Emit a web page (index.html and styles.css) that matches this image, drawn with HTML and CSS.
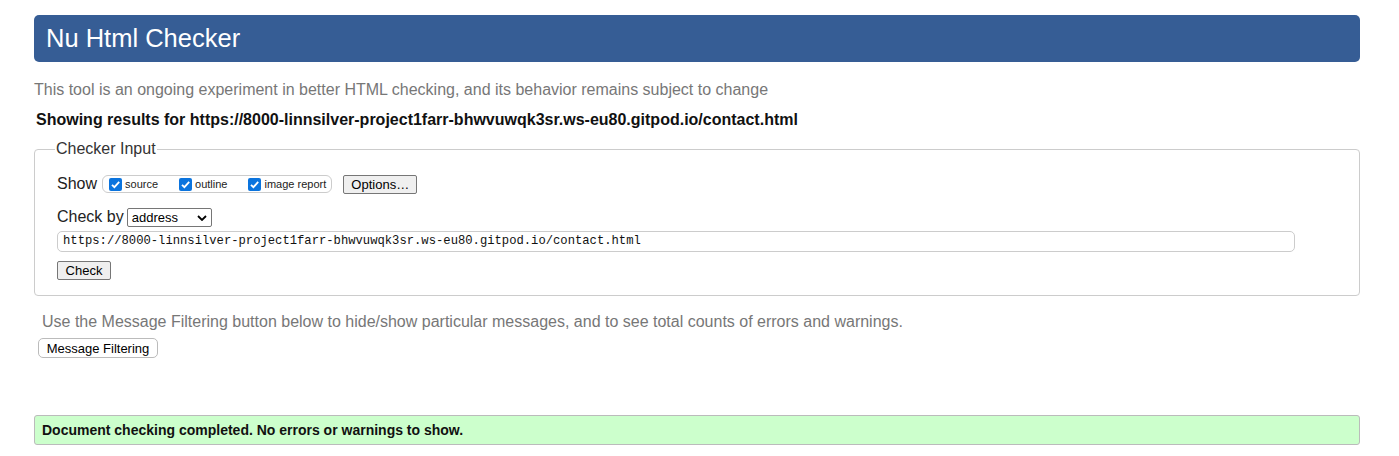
FILE: index.html
```html
<!DOCTYPE html>
<html>
<head>
<meta charset="utf-8">
<title>Nu Html Checker</title>
<link rel="stylesheet" href="styles.css">
</head>
<body>
<div class="page">
  <h1 class="header">Nu Html Checker</h1>
  <p class="intro">This tool is an ongoing experiment in better HTML checking, and its behavior remains subject to change</p>
  <p class="showing">Showing results for https://8000-linnsilver-project1farr-bhwvuwqk3sr.ws-eu80.gitpod.io/contact.html</p>
  <fieldset class="input">
    <legend>Checker Input</legend>
    <div class="row show-row">
      <span class="lbl">Show</span>
      <span class="group">
        <label class="opt"><span class="cb"><svg viewBox="0 0 13 13" width="13" height="13"><path d="M3 6.8 L5.4 9.2 L10.2 3.8" fill="none" stroke="#fff" stroke-width="1.8"/></svg></span>source</label>
        <label class="opt"><span class="cb"><svg viewBox="0 0 13 13" width="13" height="13"><path d="M3 6.8 L5.4 9.2 L10.2 3.8" fill="none" stroke="#fff" stroke-width="1.8"/></svg></span>outline</label>
        <label class="opt"><span class="cb"><svg viewBox="0 0 13 13" width="13" height="13"><path d="M3 6.8 L5.4 9.2 L10.2 3.8" fill="none" stroke="#fff" stroke-width="1.8"/></svg></span>image report</label>
      </span>
      <span class="btn options">Options…</span>
    </div>
    <div class="row by-row">
      <span class="lbl">Check by</span>
      <span class="select">address<svg class="chev" viewBox="0 0 10 6" width="10" height="6"><path d="M1 1 L5 5 L9 1" fill="none" stroke="#000" stroke-width="1.8"/></svg></span>
    </div>
    <div class="url">https://8000-linnsilver-project1farr-bhwvuwqk3sr.ws-eu80.gitpod.io/contact.html</div>
    <div class="row"><span class="btn check">Check</span></div>
  </fieldset>
  <p class="filter-note">Use the Message Filtering button below to hide/show particular messages, and to see total counts of errors and warnings.</p>
  <span class="btn filter">Message Filtering</span>
  <div class="success">Document checking completed. No errors or warnings to show.</div>
</div>
</body>
</html>
```
FILE: styles.css
```css
html, body { margin: 0; padding: 0; background: #fff; }
body { font-family: "Liberation Sans", Arial, sans-serif; color: #111; }
.page { padding: 15px 39px 0 34px; }
.header {
  margin: 0;
  height: 47px;
  box-sizing: border-box;
  background: #365d95;
  color: #fff;
  border-radius: 5px;
  font-weight: normal;
  font-size: 25.5px;
  line-height: 47px;
  padding-left: 12px;
}
.intro { margin: 18px 0 0 0; color: #777; font-size: 16px; line-height: 20px; }
.showing { margin: 10px 0 0 2px; font-weight: bold; font-size: 16px; line-height: 20px; color: #111; }
.input {
  margin: 10px 0 0 0;
  border: 1px solid #ccc;
  border-radius: 4px;
  padding: 16px 65px 15px 22px;
  min-width: 0;
}
.input legend { font-size: 16px; color: #333; padding: 0 1px; margin-left: -2px; }
.row { display: flex; align-items: center; }
.show-row { height: 20px; }
.lbl { font-size: 16px; color: #222; margin-right: 5px; }
.group {
  display: inline-flex; align-items: center;
  box-sizing: border-box; white-space: nowrap;
  border: 1px solid #ccc; border-radius: 6px;
  height: 18px; padding: 0 5px 0 6px;
  font-size: 11px;
}
.opt { display: inline-flex; align-items: center; margin-right: 21px; color: #222; white-space: nowrap; }
.opt:last-child { margin-right: 0; }
.cb {
  display: inline-flex; flex: none; width: 13px; height: 13px; background: #0b74de;
  border-radius: 2px; margin-right: 3px;
}
.btn {
  display: inline-flex; align-items: center; justify-content: center;
  box-sizing: border-box; white-space: nowrap;
  border: 1px solid #767676; background: #efefef;
  border-radius: 2px; font-size: 13px; color: #000;
}
.options { margin-left: 11px; width: 74px; height: 19px; }
.by-row { margin-top: 13px; height: 20px; }
.by-row .lbl { margin-right: 3px; }
.select {
  display: inline-flex; align-items: center; justify-content: space-between;
  box-sizing: border-box; width: 85px; height: 19px;
  border: 1px solid #767676; border-radius: 2px;
  font-size: 13px; padding: 0 4px 0 4px; color: #000;
}
.chev { margin-top: 1px; }
.url {
  margin-top: 4px; box-sizing: border-box; height: 21px;
  width: 1238px;
  border: 1px solid #ccc; border-radius: 5px;
  font-family: "Liberation Mono", "DejaVu Sans Mono", monospace; font-size: 12.2px;
  line-height: 19px; padding-left: 5px; color: #111;
}
.check { width: 54px; height: 19px; margin-top: 9px; }
.filter-note { margin: 16px 0 0 8px; color: #777; font-size: 16px; line-height: 20px; }
.filter { margin: 6px 0 0 4px; width: 120px; height: 20px; border: 1px solid #bbb; border-radius: 5px; background: #fff; }
.success {
  margin-top: 57px; box-sizing: border-box; height: 30px;
  background: #ccffcc; border: 1px solid #bbb; border-radius: 3px;
  font-weight: bold; font-size: 14px; line-height: 28px; padding-left: 7px; color: #111;
}
```
